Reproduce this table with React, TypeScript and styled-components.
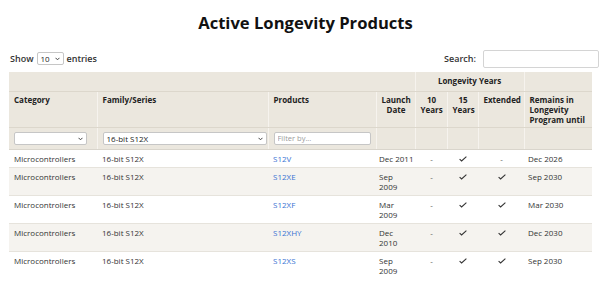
import { FC, ReactNode } from "react";
import styled, { createGlobalStyle } from "styled-components";

const GlobalStyle = createGlobalStyle`
	body {
		margin: 0;
		background-color: #ffffff;
		font-family: "Open Sans", "Liberation Sans", sans-serif;
		color: #333333;
	}
`;

const Page = styled.div`
	width: 611px;
	padding: 12px 0 0 9px;
	box-sizing: border-box;
`;

const Title = styled.h2`
	margin: 0 0 0 -9px;
	height: 22px;

	font-size: 16.6px;
	font-weight: 700;
	line-height: 22px;
	text-align: center;
	color: #111111;
`;

const Controls = styled.div`
	width: 590px;
	height: 19px;
	margin-top: 15px;
	margin-bottom: 4px;

	display: flex;
	align-items: center;
	justify-content: space-between;

	font-size: 9px;
	font-weight: 600;
	color: #333333;
`;

const ControlGroup = styled.label`
	display: flex;
	align-items: center;
	gap: 3px;
	padding-left: 1px;
`;

const SelectBox = styled.span<{ $width: number }>`
	position: relative;
	display: inline-block;
	width: ${p => p.$width}px;
	height: 13px;
	vertical-align: middle;
`;

const NativeSelect = styled.select`
	width: 100%;
	height: 100%;
	padding: 0 10px 0 3px;
	display: block;

	appearance: none;
	font-family: inherit;
	font-size: 8px;
	font-weight: 500;
	line-height: 11px;
	color: #222222;

	background-color: #ffffff;
	border: 1px solid #c6c6c6;
	border-radius: 2px;
	outline: none;
`;

const Chevron = styled.svg`
	position: absolute;
	right: 4px;
	top: 5px;
	pointer-events: none;
`;

interface SelectProps {
	width: number;
	value: string;
	children?: ReactNode;
}

const Select: FC<SelectProps> = props => (
	<SelectBox $width={props.width}>
		<NativeSelect defaultValue={props.value}>{props.children}</NativeSelect>
		<Chevron width="5" height="4" viewBox="0 0 5 4">
			<path d="M0.5 0.8 L2.5 2.8 L4.5 0.8" fill="none" stroke="#444444" strokeWidth="1" />
		</Chevron>
	</SelectBox>
);

const SearchInput = styled.input.attrs({ type: "text" })`
	width: 116px;
	height: 18px;
	box-sizing: border-box;
	margin-left: 4px;

	border: 1px solid #d4d4d4;
	border-radius: 2px;
	outline: none;
`;

const Table = styled.table`
	width: 583px;
	table-layout: fixed;
	border-collapse: collapse;

	font-size: 8px;
	line-height: 10px;
`;

const HeadCell = styled.th<{ $align?: "left" | "center" }>`
	padding: 3px 4px 2px 5px;

	text-align: ${p => p.$align ?? "left"};
	vertical-align: top;
	font-weight: 700;
	color: #222222;

	background-color: #ebe7de;
	border-left: 1px solid #f6f3ee;
	border-bottom: 1px solid #dcd7cc;

	&:first-child {
		border-left: none;
	}
`;

const GroupCell = styled(HeadCell)`
	height: 19px;
	padding: 0 4px;
	box-sizing: border-box;
	vertical-align: middle;
`;

const LabelRow = styled.tr`
	height: 35px;
`;

const FilterCell = styled(HeadCell)`
	height: 22px;
	padding: 0 0 0 5px;
	box-sizing: border-box;
	vertical-align: middle;
	border-bottom: 1px solid #d9d5cc;
`;

const FilterInput = styled.input.attrs({ type: "text", placeholder: "Filter by..." })`
	width: 97px;
	height: 13px;
	box-sizing: border-box;
	padding: 0 3px;
	display: block;

	font-family: inherit;
	font-size: 7.5px;
	color: #222222;

	border: 1px solid #c6c6c6;
	border-radius: 2px;
	outline: none;

	&::placeholder {
		color: #9a9a9a;
	}
`;

const BodyRow = styled.tr<{ $alt: boolean }>`
	background-color: ${p => (p.$alt ? "#f5f3ef" : "#ffffff")};
	border-top: 1px solid #e6e3dc;
`;

const Cell = styled.td<{ $align?: "left" | "center"; $pad?: number }>`
	padding: 4px 4px 3px ${p => p.$pad ?? 5}px;

	text-align: ${p => p.$align ?? "left"};
	vertical-align: top;
	font-weight: 500;
	color: #333333;
	white-space: pre;
`;

const ProductLink = styled.a`
	color: #3b74d4;
	text-decoration: none;
`;

const Dash = styled.span`
	color: #555555;
`;

const CheckIcon = styled.svg`
	display: block;
	margin: 2px auto 0;
`;

const Check: FC = () => (
	<CheckIcon width="8" height="6" viewBox="0 0 8 6">
		<path d="M0.6 3.2 L2.6 5 L7.4 0.6" fill="none" stroke="#333333" strokeWidth="1.1" />
	</CheckIcon>
);

interface Product {
	name: string;
	launch: string;
	tenYears: boolean;
	fifteenYears: boolean;
	extended: boolean;
	until: string;
}

const PRODUCTS: Product[] = [
	{ name: "S12V", launch: "Dec 2011", tenYears: false, fifteenYears: true, extended: false, until: "Dec 2026" },
	{ name: "S12XE", launch: "Sep\n2009", tenYears: false, fifteenYears: true, extended: true, until: "Sep 2030" },
	{ name: "S12XF", launch: "Mar\n2009", tenYears: false, fifteenYears: true, extended: true, until: "Mar 2030" },
	{ name: "S12XHY", launch: "Dec\n2010", tenYears: false, fifteenYears: true, extended: true, until: "Dec 2030" },
	{ name: "S12XS", launch: "Sep\n2009", tenYears: false, fifteenYears: true, extended: true, until: "Sep 2030" },
];

const COLUMNS = [88, 171, 108, 39, 32, 31, 46, 68];

const Mark: FC<{ on: boolean }> = ({ on }) => (on ? <Check /> : <Dash>-</Dash>);

const App: FC = () => {
	return (
		<Page>
			<GlobalStyle />
			<Title>Active Longevity Products</Title>
			<Controls>
				<ControlGroup>
					Show
					<Select width={27} value="10">
						<option>10</option>
						<option>25</option>
						<option>50</option>
					</Select>
					entries
				</ControlGroup>
				<ControlGroup>
					Search:
					<SearchInput />
				</ControlGroup>
			</Controls>
			<Table>
				<colgroup>
					{COLUMNS.map((w, i) => (
						<col key={i} style={{ width: w }} />
					))}
				</colgroup>
				<thead>
					<tr>
						<GroupCell colSpan={4} />
						<GroupCell colSpan={3} $align="center">
							Longevity Years
						</GroupCell>
						<GroupCell />
					</tr>
					<LabelRow>
						<HeadCell>Category</HeadCell>
						<HeadCell>Family/Series</HeadCell>
						<HeadCell>Products</HeadCell>
						<HeadCell $align="center">
							Launch
							<br />
							Date
						</HeadCell>
						<HeadCell $align="center">
							10
							<br />
							Years
						</HeadCell>
						<HeadCell $align="center">
							15
							<br />
							Years
						</HeadCell>
						<HeadCell>Extended</HeadCell>
						<HeadCell>Remains in Longevity Program until</HeadCell>
					</LabelRow>
					<tr>
						<FilterCell>
							<Select width={73} value="">
								<option value=""></option>
								<option>Microcontrollers</option>
							</Select>
						</FilterCell>
						<FilterCell>
							<Select width={164} value="16-bit S12X">
								<option>16-bit S12X</option>
							</Select>
						</FilterCell>
						<FilterCell>
							<FilterInput />
						</FilterCell>
						<FilterCell />
						<FilterCell />
						<FilterCell />
						<FilterCell />
						<FilterCell />
					</tr>
				</thead>
				<tbody>
					{PRODUCTS.map((p, i) => (
						<BodyRow key={p.name} $alt={i % 2 === 1}>
							<Cell>Microcontrollers</Cell>
							<Cell>16-bit S12X</Cell>
							<Cell>
								<ProductLink href="#">{p.name}</ProductLink>
							</Cell>
							<Cell $pad={3}>{p.launch}</Cell>
							<Cell $align="center">
								<Mark on={p.tenYears} />
							</Cell>
							<Cell $align="center">
								<Mark on={p.fifteenYears} />
							</Cell>
							<Cell $align="center">
								<Mark on={p.extended} />
							</Cell>
							<Cell $pad={4}>{p.until}</Cell>
						</BodyRow>
					))}
				</tbody>
			</Table>
		</Page>
	);
};

export default App;
